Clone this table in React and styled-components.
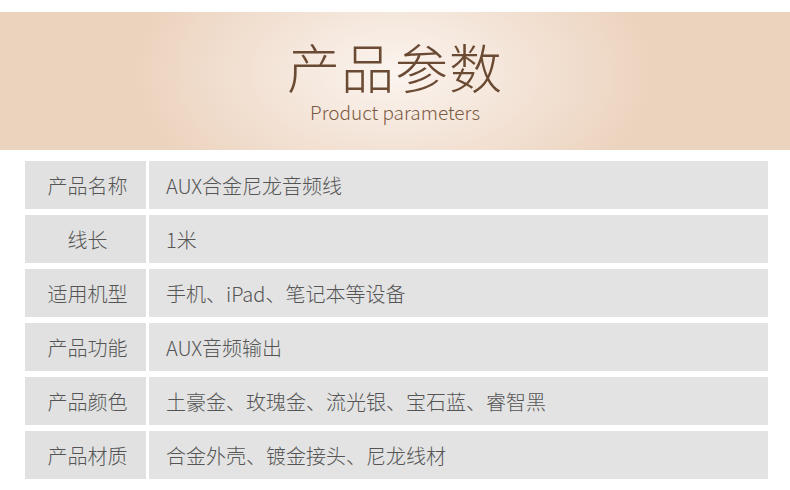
import styled, { createGlobalStyle } from "styled-components"

const rows = [
  { label: "产品名称", value: "AUX合金尼龙音频线" },
  { label: "线长", value: "1米" },
  { label: "适用机型", value: "手机、iPad、笔记本等设备" },
  { label: "产品功能", value: "AUX音频输出" },
  { label: "产品颜色", value: "土豪金、玫瑰金、流光银、宝石蓝、睿智黑" },
  { label: "产品材质", value: "合金外壳、镀金接头、尼龙线材" },
]

export default function App() {
  return (
    <>
      <GlobalStyle />
      <Page>
        <Header>
          <Title>产品参数</Title>
          <Subtitle>Product parameters</Subtitle>
        </Header>
        <Table>
          {rows.map(row => (
            <Row key={row.label}>
              <Label>{row.label}</Label>
              <Value>{row.value}</Value>
            </Row>
          ))}
        </Table>
      </Page>
    </>
  )
}

const GlobalStyle = createGlobalStyle`
  html, body {
    margin: 0;
    padding: 0;
    background: #ffffff;
  }

  body {
    font-family: "Noto Sans CJK SC", "Noto Sans", sans-serif;
  }
`

const Page = styled.div`
  width: 790px;
  height: 490px;
  padding-top: 12px;
  box-sizing: border-box;
  background: #ffffff;
  overflow: hidden;
`

const Header = styled.header`
  height: 138px;
  box-sizing: border-box;
  padding-top: 28px;
  display: flex;
  flex-direction: column;
  align-items: center;
  background: radial-gradient(
    ellipse 260px 150px at 395px 60px,
    #fbf4ef 0%,
    #f4e5d9 45%,
    #ecd3be 100%
  );
`

const Title = styled.h1`
  margin: 0;
  font-size: 53px;
  line-height: 1;
  font-weight: 300;
  letter-spacing: 1px;
  color: #6b4a33;
`

const Subtitle = styled.p`
  margin: 9px 0 0;
  font-size: 19px;
  line-height: 1;
  font-weight: 300;
  color: #7a5a43;
  letter-spacing: 0;
`

const Table = styled.div`
  margin-top: 11px;
  padding: 0 22px 0 25px;
  display: flex;
  flex-direction: column;
  gap: 6px;
`

const Row = styled.div`
  display: grid;
  grid-template-columns: 121px 1fr;
  column-gap: 3px;
  height: 48px;
`

const Cell = styled.div`
  display: flex;
  align-items: center;
  background: #e3e3e3;
  font-size: 20px;
  font-weight: 300;
  color: #555555;
  white-space: nowrap;
`

const Label = styled(Cell)`
  justify-content: center;
  padding-left: 4px;
  background: #e1e1e1;
`

const Value = styled(Cell)`
  padding-left: 17px;
`
